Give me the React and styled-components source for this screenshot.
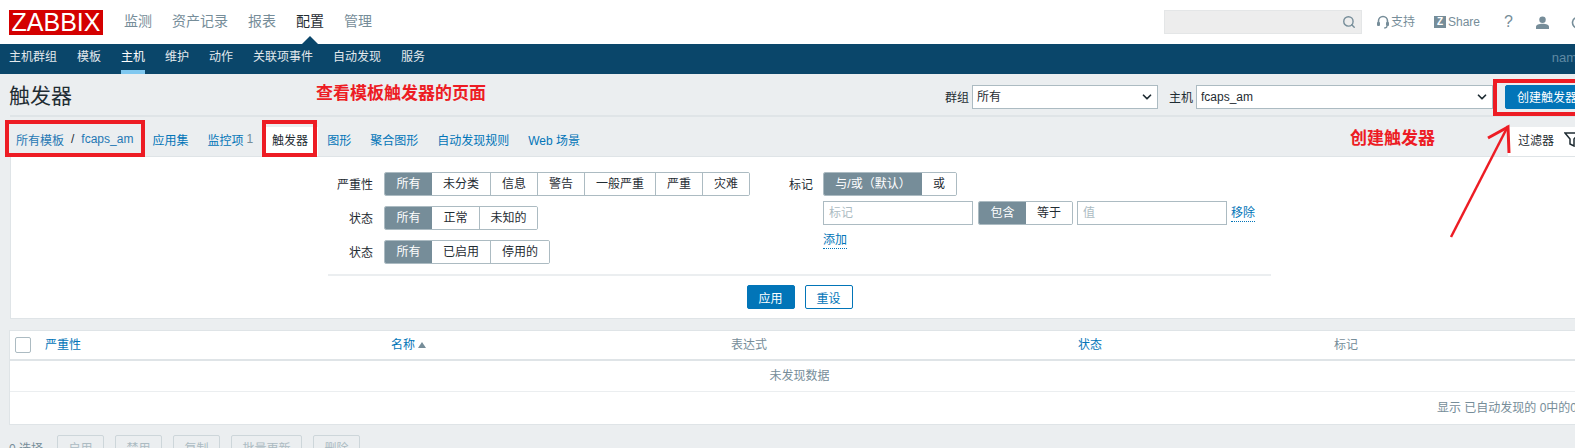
import React from 'react'
import styled, { createGlobalStyle } from 'styled-components'
import { ChevronDown, Search } from 'lucide-react'

const GlobalStyle = createGlobalStyle`
  html, body {
    margin: 0;
    padding: 0;
    overflow: hidden;
    background: #ebeef0;
  }
  * { box-sizing: border-box; }
`;

const Viewport = styled.div`
  position: relative;
  width: 1575px;
  height: 448px;
  overflow: hidden;
`;

const Page = styled.div`
  width: 1599px;
  font-family: "Liberation Sans", "Noto Sans CJK SC", sans-serif;
  font-size: 12px;
  color: #1f2c33;
`;

/* top bar */
const TopBar = styled.header`
  height: 44px;
  background: #fff;
  display: flex;
  align-items: center;
  padding-left: 9px;
`;

const Logo = styled.div`
  width: 94px;
  height: 25px;
  background: #d40000;
  color: #fff;
  font-size: 25px;
  line-height: 25px;
  text-align: center;
  margin-right: 21px;
`;

const MainNav = styled.nav`
  display: flex;
  gap: 20px;
  margin-top: -2px;
`;

const MainItem = styled.span`
  position: relative;
  font-size: 14px;
  line-height: 20px;
  color: ${p => (p.$active ? '#1f2c33' : '#768d99')};
  ${p => p.$active && `
    &::after {
      content: '';
      position: absolute;
      left: 6px;
      top: 25px;
      border-left: 8px solid transparent;
      border-right: 8px solid transparent;
      border-bottom: 8px solid #0a466a;
    }
  `}
`;

const TopTools = styled.div`
  margin-left: auto;
  display: flex;
  align-items: center;
  color: #768d99;
`;

const SearchBox = styled.div`
  width: 198px;
  height: 24px;
  background: #ededed;
  border: 1px solid #e4e6e7;
  display: flex;
  align-items: center;
  justify-content: flex-end;
  padding-right: 5px;
  margin-right: 15px;
`;

const ToolLink = styled.span`
  display: flex;
  align-items: center;
  gap: 2px;
  width: ${p => p.$width}px;
  line-height: 16px;
`;

const ZBadge = styled.span`
  width: 12px;
  height: 12px;
  background: #768d99;
  color: #fff;
  font-size: 10px;
  font-weight: 700;
  line-height: 12px;
  text-align: center;
`;

const Help = styled.span`
  width: 35px;
  padding-left: 3px;
  font-size: 16px;
  line-height: 20px;
`;

/* sub nav */
const SubBar = styled.nav`
  height: 30px;
  background: #0a466a;
  display: flex;
  gap: 20px;
  padding-left: 9px;
`;

const SubItem = styled.span`
  height: 30px;
  line-height: 27px;
  color: ${p => (p.$active ? '#fff' : '#e3e9ed')};
  border-bottom: ${p => (p.$active ? '4px solid #80c8f0' : 'none')};
`;

const ServerName = styled.span`
  margin-left: auto;
  padding-right: 22px;
  font-size: 13px;
  line-height: 28px;
  color: #5f8aa3;
`;

/* title row */
const TitleRow = styled.div`
  height: 43px;
  margin: 0 10px;
  border-bottom: 2px solid #dfe4e7;
  display: flex;
  align-items: center;
  justify-content: space-between;
`;

const Title = styled.h1`
  margin: 3px 0 0 -1px;
  font-size: 21px;
  font-weight: 400;
  line-height: 28px;
`;

const TitleControls = styled.div`
  display: flex;
  align-items: center;
  margin-top: 4px;
`;

const FieldLabel = styled.label`
  margin-right: 3px;
  color: #1f2c33;
`;

const SelectWrap = styled.div`
  position: relative;
  width: ${p => p.$width}px;
  height: 24px;
  margin-right: ${p => p.$gap}px;
  & > svg {
    position: absolute;
    right: 4px;
    top: 5px;
    pointer-events: none;
  }
`;

const Select = styled.select`
  appearance: none;
  width: 100%;
  height: 24px;
  border: 1px solid #acbbc2;
  border-radius: 0;
  background: #fff;
  color: #1f2c33;
  font: inherit;
  padding: 0 4px;
`;

const Button = styled.button`
  height: 24px;
  width: ${p => p.$width}px;
  padding: 0;
  border: 1px solid #0275b8;
  border-radius: 2px;
  background: ${p => (p.$outline ? '#fff' : '#0275b8')};
  color: ${p => (p.$outline ? '#0275b8' : '#fff')};
  font: inherit;
`;

/* tabs */
const TabRow = styled.div`
  height: 40px;
  margin: 0 10px;
  border-bottom: 1px solid #dfe4e7;
  display: flex;
  align-items: stretch;
`;

const Crumbs = styled.div`
  display: flex;
  align-items: center;
  gap: 7px;
  padding: 10px 0 5px 6px;
  margin-right: 9.500px;
  color: #1f2c33;
  & > a { color: #1f78b4; }
`;

const Tab = styled.a`
  display: flex;
  align-items: center;
  margin-top: 10px;
  padding: 0 9.500px 5px;
  color: ${p => (p.$active ? '#1f2c33' : '#0275b8')};
  background: ${p => (p.$active ? '#fff' : 'transparent')};
  & > small {
    margin-left: 3px;
    font-size: 12px;
    color: #768d99;
  }
`;

const FilterTab = styled.div`
  margin-left: auto;
  margin-top: 10px;
  width: 81px;
  background: #fff;
  display: flex;
  align-items: center;
  gap: 10px;
  padding: 0 0 5px 10px;
`;

/* filter panel */
const FilterPanel = styled.section`
  margin-left: 10px;
  width: 1579px;
  height: 162px;
  background: #fff;
  border-left: 1px solid #dfe4e7;
  border-bottom: 1px solid #dfe4e7;
  padding: 15px 0 0 317px;
`;

const FilterBody = styled.div`
  display: flex;
  height: 102px;
`;

const FilterColumn = styled.div`
  display: flex;
  flex-direction: column;
  width: ${p => p.$width}px;
  gap: ${p => p.$gap}px;
`;

const FilterRow = styled.div`
  display: flex;
  align-items: center;
  gap: ${p => p.$gap}px;
`;

const RowLabel = styled.span`
  flex: none;
  width: ${p => p.$width}px;
  margin-top: -2px;
  text-align: right;
`;

const Indented = styled.div`
  margin-left: 34px;
  display: flex;
  align-items: center;
  gap: 5px;
`;

const Segments = styled.div`
  display: flex;
  height: 24px;
  border: 1px solid #acbbc2;
  border-radius: 2px;
  overflow: hidden;
  background: #fff;
  margin-right: ${p => p.$tight ? -1 : 0}px;
`;

const Segment = styled.span`
  width: ${p => p.$width}px;
  line-height: 23px;
  text-align: center;
  background: ${p => (p.$on ? '#768d99' : '#fff')};
  color: ${p => (p.$on ? '#fff' : '#1f2c33')};
  border-left: ${p => (p.$divider ? '1px solid #acbbc2' : 'none')};
`;

const TagInput = styled.input`
  width: 150px;
  height: 24px;
  border: 1px solid #acbbc2;
  padding: 0 5px;
  font: inherit;
  color: #1f2c33;
  &::placeholder { color: #acbbc2; opacity: 1; }
`;

const DottedLink = styled.a`
  margin: 1px 0 0 ${p => p.$nudge || 0}px;
  color: #0275b8;
  line-height: 15px;
  border-bottom: 1px dotted #0275b8;
`;

const AddRow = styled.div`
  margin: 2px 0 0 34px;
  display: flex;
`;

const Divider = styled.div`
  width: 943px;
  border-top: 2px solid #ebeef0;
`;

const FilterActions = styled.div`
  width: 943px;
  display: flex;
  justify-content: center;
  gap: 10px;
  margin-top: 9px;
`;

/* table */
const Table = styled.section`
  margin: 11px 0 0 10px;
  width: 1579px;
  background: #fff;
  border: 1px solid #dfe4e7;
  border-width: 1px 0 1px 0;
  box-shadow: -1px 0 0 #dfe4e7;
`;

const HeadRow = styled.div`
  height: 30px;
  border-bottom: 2px solid #dfe4e7;
  display: grid;
  grid-template-columns: 35px 346px 340px 347px 256px 1fr;
  align-items: center;
`;

const CheckCell = styled.div`
  padding-left: 5px;
  display: flex;
`;

const Checkbox = styled.span`
  width: 16px;
  height: 16px;
  border: 1px solid #acbbc2;
  border-radius: 2px;
  background: #fff;
`;

const HeadCell = styled.span`
  display: flex;
  align-items: center;
  gap: 3px;
  margin-top: -3px;
  color: ${p => (p.$link ? '#0275b8' : '#768d99')};
`;

const SortUp = styled.i`
  display: block;
  margin-top: 2px;
  border-left: 4px solid transparent;
  border-right: 4px solid transparent;
  border-bottom: 6px solid #768d99;
`;

const EmptyRow = styled.div`
  height: 31px;
  border-bottom: 1px solid #ebeef0;
  line-height: 30px;
  text-align: center;
  color: #768d99;
`;

const FootRow = styled.div`
  height: 32px;
  padding-right: 12px;
  line-height: 32px;
  text-align: right;
  color: #768d99;
`;

/* bulk actions */
const ActionBar = styled.div`
  display: flex;
  align-items: center;
  margin: 10px 0 0 9px;
`;

const SelectedCount = styled.span`
  width: 48px;
  color: #768d99;
`;

const MassButton = styled.button`
  width: ${p => p.$width || 47}px;
  height: 24px;
  margin-right: 11px;
  padding: 0;
  border: 1px solid #cdd6da;
  border-radius: 2px;
  background: transparent;
  color: #acbbc2;
  font: inherit;
`;

/* red notes someone drew over the screenshot */
const NoteBox = styled.div`
  position: absolute;
  left: ${p => p.$x}px;
  top: ${p => p.$y}px;
  width: ${p => p.$w}px;
  height: ${p => p.$h}px;
  border: 4px solid #ed1c24;
`;

const NoteText = styled.span`
  position: absolute;
  left: ${p => p.$x}px;
  top: ${p => p.$y}px;
  font-family: "Noto Sans CJK SC", sans-serif;
  font-size: 17px;
  font-weight: 700;
  line-height: 20px;
  white-space: nowrap;
  color: #ed1c24;
`;

const NoteArrow = styled.svg`
  position: absolute;
  left: 1440px;
  top: 116px;
`;

const HeadsetIcon = () => (
  <svg width="12" height="14" viewBox="0 0 12 14" fill="none">
    <path d="M1.500 9V6a4.500 4.500 0 0 1 9 0v3" stroke="#768d99" strokeWidth="1.600" />
    <rect x="0" y="7" width="3" height="4" rx="1" fill="#768d99" />
    <rect x="9" y="7" width="3" height="4" rx="1" fill="#768d99" />
    <path d="M10 11c0 1.500-1 2-3 2" stroke="#768d99" strokeWidth="1.200" />
  </svg>
)

const UserIcon = () => (
  <svg width="13" height="13" viewBox="0 0 16 16" fill="#768d99">
    <circle cx="8" cy="4.500" r="4" />
    <path d="M0 16v-3c0-2 3.500-3.500 8-3.500s8 1.500 8 3.500v3z" />
  </svg>
)

const PowerIcon = () => (
  <svg width="14" height="14" viewBox="0 0 14 14" fill="none" stroke="#768d99" strokeWidth="1.600">
    <path d="M4 3a5.500 5.500 0 1 0 6 0" />
    <path d="M7 1v5" />
  </svg>
)

const FunnelIcon = () => (
  <svg width="16" height="15" viewBox="0 0 16 15" fill="none" stroke="#1f2c33" strokeWidth="1.500">
    <path d="M1 1h14l-5 6v7l-4-2V7z" />
  </svg>
)

const mainItems = ['监测', '资产记录', '报表', '配置', '管理']
const subItems = ['主机群组', '模板', '主机', '维护', '动作', '关联项事件', '自动发现', '服务']
const severities = [['所有', 47], ['未分类', 58], ['信息', 47], ['警告', 47], ['一般严重', 71], ['严重', 47], ['灾难', 47]]

function SegmentGroup({ items, tight }) {
  return (
    <Segments $tight={tight}>
      {items.map(([label, width], i) => (
        <Segment key={label} $width={width} $on={i === 0} $divider={i > 1}>{label}</Segment>
      ))}
    </Segments>
  )
}

export default function App() {
  return (
    <Viewport>
      <GlobalStyle />
      <Page>
        <TopBar>
          <Logo>ZABBIX</Logo>
          <MainNav>
            {mainItems.map(item => (
              <MainItem key={item} $active={item === '配置'}>{item}</MainItem>
            ))}
          </MainNav>
          <TopTools>
            <SearchBox><Search size={14} color="#768d99" strokeWidth={2.4} /></SearchBox>
            <ToolLink $width={57}><HeadsetIcon />支持</ToolLink>
            <ToolLink $width={67}><ZBadge>Z</ZBadge>Share</ToolLink>
            <Help>?</Help>
            <ToolLink $width={35}><UserIcon /></ToolLink>
            <ToolLink $width={28}><PowerIcon /></ToolLink>
          </TopTools>
        </TopBar>

        <SubBar>
          {subItems.map(item => (
            <SubItem key={item} $active={item === '主机'}>{item}</SubItem>
          ))}
          <ServerName>nam</ServerName>
        </SubBar>

        <TitleRow>
          <Title>触发器</Title>
          <TitleControls>
            <FieldLabel>群组</FieldLabel>
            <SelectWrap $width={186} $gap={11}>
              <Select defaultValue="all"><option value="all">所有</option></Select>
              <ChevronDown size={14} strokeWidth={3} color="#1f2c33" />
            </SelectWrap>
            <FieldLabel>主机</FieldLabel>
            <SelectWrap $width={297} $gap={12}>
              <Select defaultValue="fcaps"><option value="fcaps">fcaps_am</option></Select>
              <ChevronDown size={14} strokeWidth={3} color="#1f2c33" />
            </SelectWrap>
            <Button $width={84}>创建触发器</Button>
          </TitleControls>
        </TitleRow>

        <TabRow>
          <Crumbs>
            <a>所有模板</a>
            <span>/</span>
            <a>fcaps_am</a>
          </Crumbs>
          <Tab>应用集</Tab>
          <Tab>监控项<small>1</small></Tab>
          <Tab $active>触发器</Tab>
          <Tab>图形</Tab>
          <Tab>聚合图形</Tab>
          <Tab>自动发现规则</Tab>
          <Tab>Web 场景</Tab>
          <FilterTab>过滤器<FunnelIcon /></FilterTab>
        </TabRow>

        <FilterPanel>
          <FilterBody>
            <FilterColumn $width={461} $gap={10}>
              <FilterRow $gap={11}>
                <RowLabel $width={45}>严重性</RowLabel>
                <SegmentGroup items={severities} />
              </FilterRow>
              <FilterRow $gap={11}>
                <RowLabel $width={45}>状态</RowLabel>
                <SegmentGroup items={[['所有', 47], ['正常', 47], ['未知的', 58]]} />
              </FilterRow>
              <FilterRow $gap={11}>
                <RowLabel $width={45}>状态</RowLabel>
                <SegmentGroup items={[['所有', 47], ['已启用', 58], ['停用的', 59]]} />
              </FilterRow>
            </FilterColumn>
            <FilterColumn $width={482} $gap={5}>
              <FilterRow $gap={10}>
                <RowLabel $width={24}>标记</RowLabel>
                <SegmentGroup items={[['与/或（默认）', 98], ['或', 34]]} />
              </FilterRow>
              <Indented>
                <TagInput placeholder="标记" />
                <SegmentGroup tight items={[['包含', 47], ['等于', 46]]} />
                <TagInput placeholder="值" />
                <DottedLink $nudge={-1}>移除</DottedLink>
              </Indented>
              <AddRow><DottedLink>添加</DottedLink></AddRow>
            </FilterColumn>
          </FilterBody>
          <Divider />
          <FilterActions>
            <Button $width={48}>应用</Button>
            <Button $width={48} $outline>重设</Button>
          </FilterActions>
        </FilterPanel>

        <Table>
          <HeadRow>
            <CheckCell><Checkbox /></CheckCell>
            <HeadCell $link>严重性</HeadCell>
            <HeadCell $link>名称<SortUp /></HeadCell>
            <HeadCell>表达式</HeadCell>
            <HeadCell $link>状态</HeadCell>
            <HeadCell>标记</HeadCell>
          </HeadRow>
          <EmptyRow>未发现数据</EmptyRow>
          <FootRow>显示 已自动发现的 0中的0</FootRow>
        </Table>

        <ActionBar>
          <SelectedCount>0 选择</SelectedCount>
          <MassButton>启用</MassButton>
          <MassButton>禁用</MassButton>
          <MassButton>复制</MassButton>
          <MassButton $width={71}>批量更新</MassButton>
          <MassButton>删除</MassButton>
        </ActionBar>
      </Page>

      <NoteText $x={316} $y={82}>查看模板触发器的页面</NoteText>
      <NoteText $x={1350} $y={127}>创建触发器</NoteText>
      <NoteBox $x={5} $y={120} $w={140} $h={37} />
      <NoteBox $x={262} $y={120} $w={55} $h={37} />
      <NoteBox $x={1493} $y={79} $w={100} $h={37} />
      <NoteArrow width="80" height="125" viewBox="0 0 80 125" fill="none" stroke="#ed1c24" strokeWidth="3">
        <path d="M11 121L68 10" strokeWidth="2.500" />
        <path d="M48 22L68 11L69 37" />
      </NoteArrow>
    </Viewport>
  )
}
